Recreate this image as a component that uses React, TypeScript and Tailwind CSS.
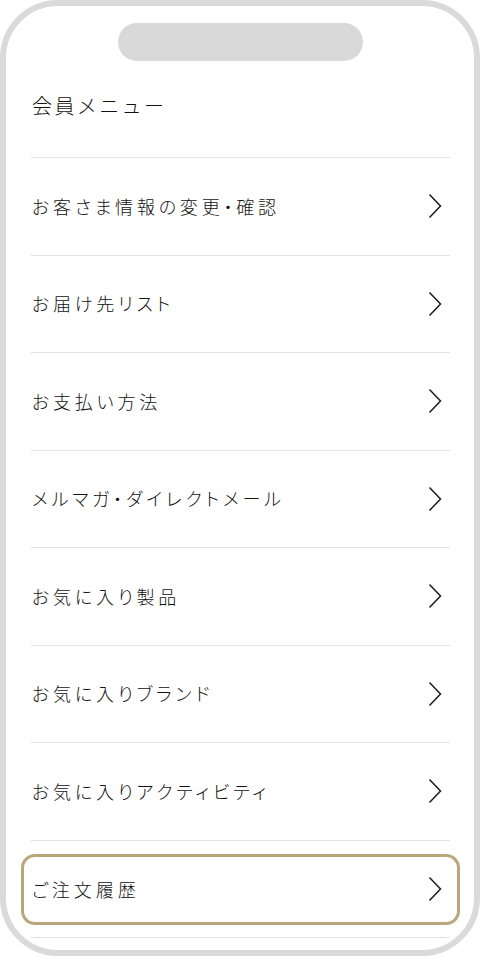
import React from 'react';

const items = [
  'お客さま情報の変更・確認',
  'お届け先リスト',
  'お支払い方法',
  'メルマガ・ダイレクトメール',
  'お気に入り製品',
  'お気に入りブランド',
  'お気に入りアクティビティ',
];

// Thin right chevron used at the end of each row
const Chevron = () => (
  <svg width="14" height="26" viewBox="0 0 14 26" fill="none" className="shrink-0">
    <polyline points="1.5,1.5 12.5,13 1.5,24.5" stroke="#1a1a1a" strokeWidth="1.5" strokeLinejoin="miter" />
  </svg>
);

const App: React.FC = () => {
  return (
    <div
      className="w-[480px] h-[960px] bg-white"
      style={{ fontFamily: '"Noto Sans CJK JP", "Noto Sans", sans-serif' }}
    >
      <div className="h-[956px] border-[6px] border-[#dadada] rounded-[58px] overflow-hidden flex flex-col">
        {/* notch */}
        <div className="mt-[17px] mx-auto w-[245px] h-[38px] rounded-full bg-[#d9d9d9] shrink-0" />

        <div className="px-[25px] pr-[24px]">
          <h1 className="mt-[31px] mb-[37px] ml-[1px] text-[20px] leading-[28px] tracking-[2.4px] text-[#111] font-light">
            会員メニュー
          </h1>

          <ul className="[font-feature-settings:'palt']">
            {items.map((label) => (
              <li
                key={label}
                className="h-[97.5px] border-t border-[#e3e3e3] flex items-center justify-between pl-[1px] pr-[8px]"
              >
                <span className="text-[18px] tracking-[3.8px] text-[#111] font-light">{label}</span>
                <Chevron />
              </li>
            ))}
            <li className="h-[97.5px] border-t border-[#e3e3e3] pt-[13px] pb-[12px]">
              <div className="-mx-[10px] h-full border-[3px] border-[#b9a67b] rounded-[14px] flex items-center justify-between pl-[8px] pr-[15px]">
                <span className="text-[18px] tracking-[4px] text-[#111] font-light">ご注文履歴</span>
                <Chevron />
              </div>
            </li>
            <li className="border-t border-[#e3e3e3]" />
          </ul>
        </div>
      </div>
    </div>
  );
};

export default App;
